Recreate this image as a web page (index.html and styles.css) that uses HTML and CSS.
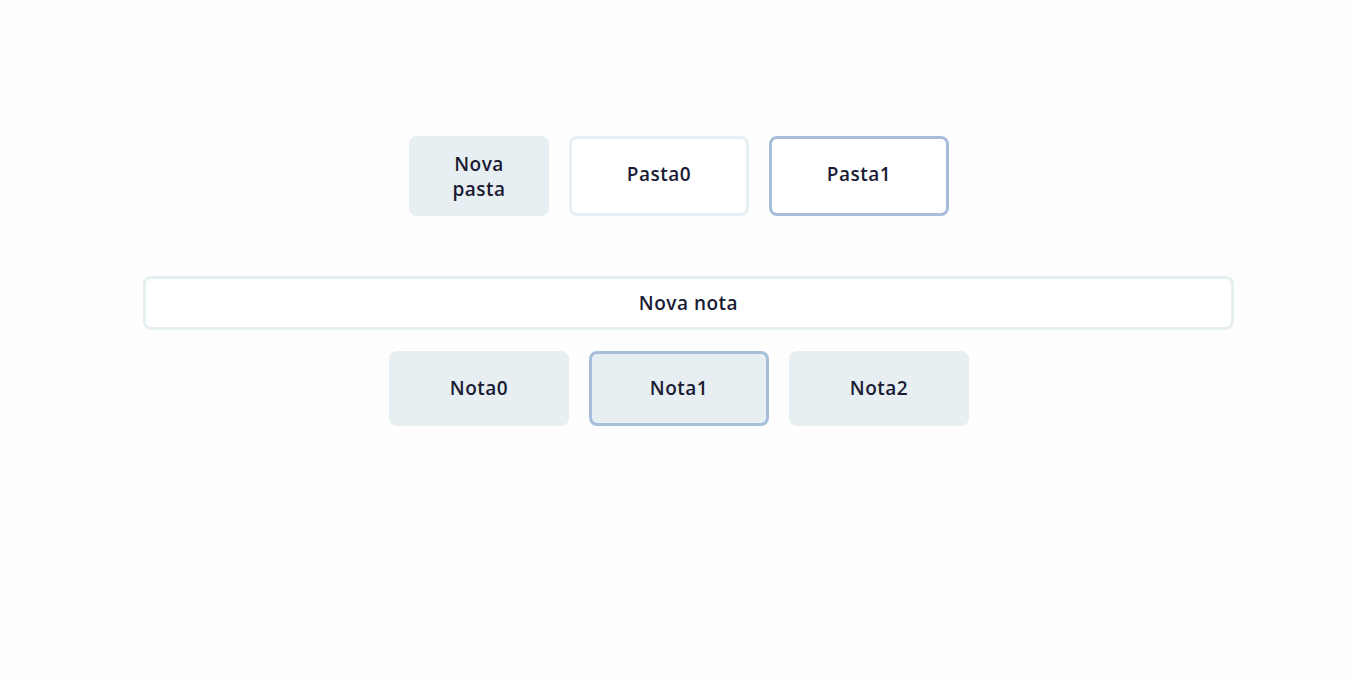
FILE: index.html
```html
<!DOCTYPE html>
<html lang="pt">
<head>
<meta charset="utf-8">
<title>Notas</title>
<link rel="stylesheet" href="styles.css">
</head>
<body>
<main class="app">
  <section class="folders">
    <button class="tile tile-new">Nova<br>pasta</button>
    <button class="tile tile-folder">Pasta0</button>
    <button class="tile tile-folder tile-active">Pasta1</button>
  </section>
  <section class="new-note-row">
    <button class="new-note">Nova nota</button>
  </section>
  <section class="notes">
    <button class="note">Nota0</button>
    <button class="note note-active">Nota1</button>
    <button class="note">Nota2</button>
  </section>
</main>
</body>
</html>
```
FILE: styles.css
```css
* { box-sizing: border-box; }
html, body { margin: 0; padding: 0; background: #fefefe; }
body {
  font-family: "Open Sans", "Noto Sans", "Lato", sans-serif;
  color: #1b1a33;
}
.app {
  padding-top: 136px;
  display: flex;
  flex-direction: column;
}
button {
  font-family: inherit;
  font-weight: 600;
  font-size: 19px;
  letter-spacing: 0.5px;
  color: #1b1a33;
  cursor: pointer;
  line-height: 25px;
  padding: 0;
}
.folders {
  display: flex;
  justify-content: center;
  gap: 20px;
  padding-left: 2px;
}
.tile {
  height: 80px;
  border-radius: 8px;
  border: 3px solid #e7eff2;
  background: #ffffff;
  padding-bottom: 4px;
}
.tile-new {
  width: 140px;
  background: #e7eff2;
  border-color: #e7eff2;
  padding-top: 2px;
  padding-bottom: 0;
}
.tile-folder { width: 180px; }
.tile-active { border-color: #a6bed9; }
.new-note-row {
  margin-top: 60px;
  padding: 0 122px 0 143px;
}
.new-note {
  width: 100%;
  height: 54px;
  border-radius: 8px;
  border: 3px solid #e6eff2;
  background: #ffffff;
}
.notes {
  margin-top: 21px;
  display: flex;
  justify-content: center;
  gap: 20px;
  padding-left: 2px;
}
.note {
  width: 180px;
  height: 75px;
  border-radius: 8px;
  border: 3px solid #e7eff2;
  background: #e7eff2;
}
.note-active { border-color: #a6bed9; }
```
